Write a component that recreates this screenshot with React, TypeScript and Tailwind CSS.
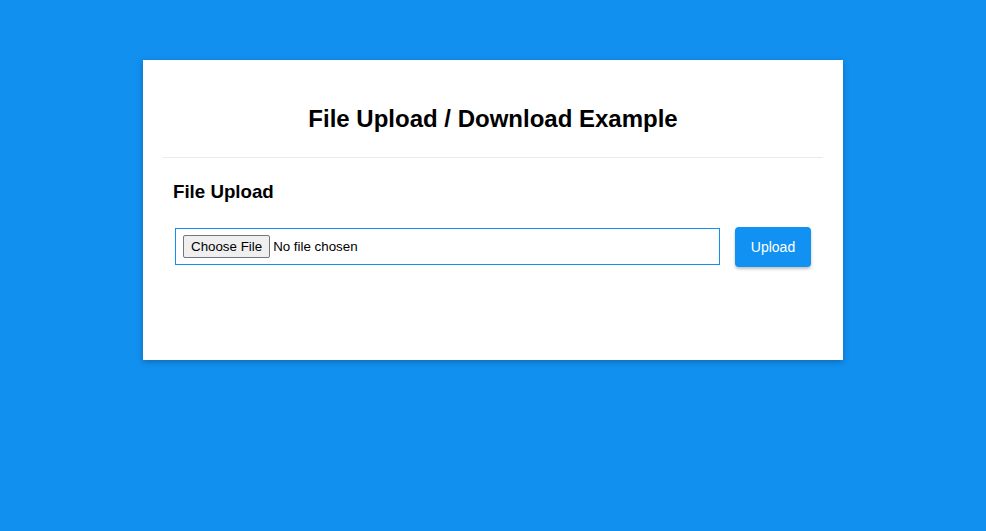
export default function App() {
  return (
    <div className="min-h-[531px] w-full bg-[#1190f0] pt-[60px] font-['Liberation_Sans',Arial,sans-serif]">
      <div className="mx-auto h-[300px] w-[700px] bg-white px-5 shadow-[0_2px_6px_rgba(0,0,0,0.25)]">
        <div className="border-b border-[#ebebeb] pt-[45px] pb-[24px] text-center">
          <h1 className="text-[24px] leading-[28px] font-bold text-black">File Upload / Download Example</h1>
        </div>
        <div className="px-[10px] pt-[23px]">
          <h2 className="text-[18.72px] leading-[22px] font-bold text-black">File Upload</h2>
          <div className="mt-[25px] flex items-start gap-[15px] pl-[2px]">
            <div className="flex h-[37px] w-[545px] items-center border border-solid border-[color:#1190f0] px-[7px]">
              <input
                type="file"
                className="block w-full text-[13.33px] text-black file:mr-[3px] file:rounded-[2px] file:border file:border-solid file:border-[color:#767676] file:bg-[#efefef] file:px-[7px] file:py-[1px] file:text-[13.33px] file:text-black"
              />
            </div>
            <button className="-mt-px h-[40px] w-[76px] rounded-[4px] bg-[#1191f2] text-[14px] text-white shadow-[0_2px_3px_rgba(0,0,0,0.25)]">
              Upload
            </button>
          </div>
        </div>
      </div>
    </div>
  );
}
